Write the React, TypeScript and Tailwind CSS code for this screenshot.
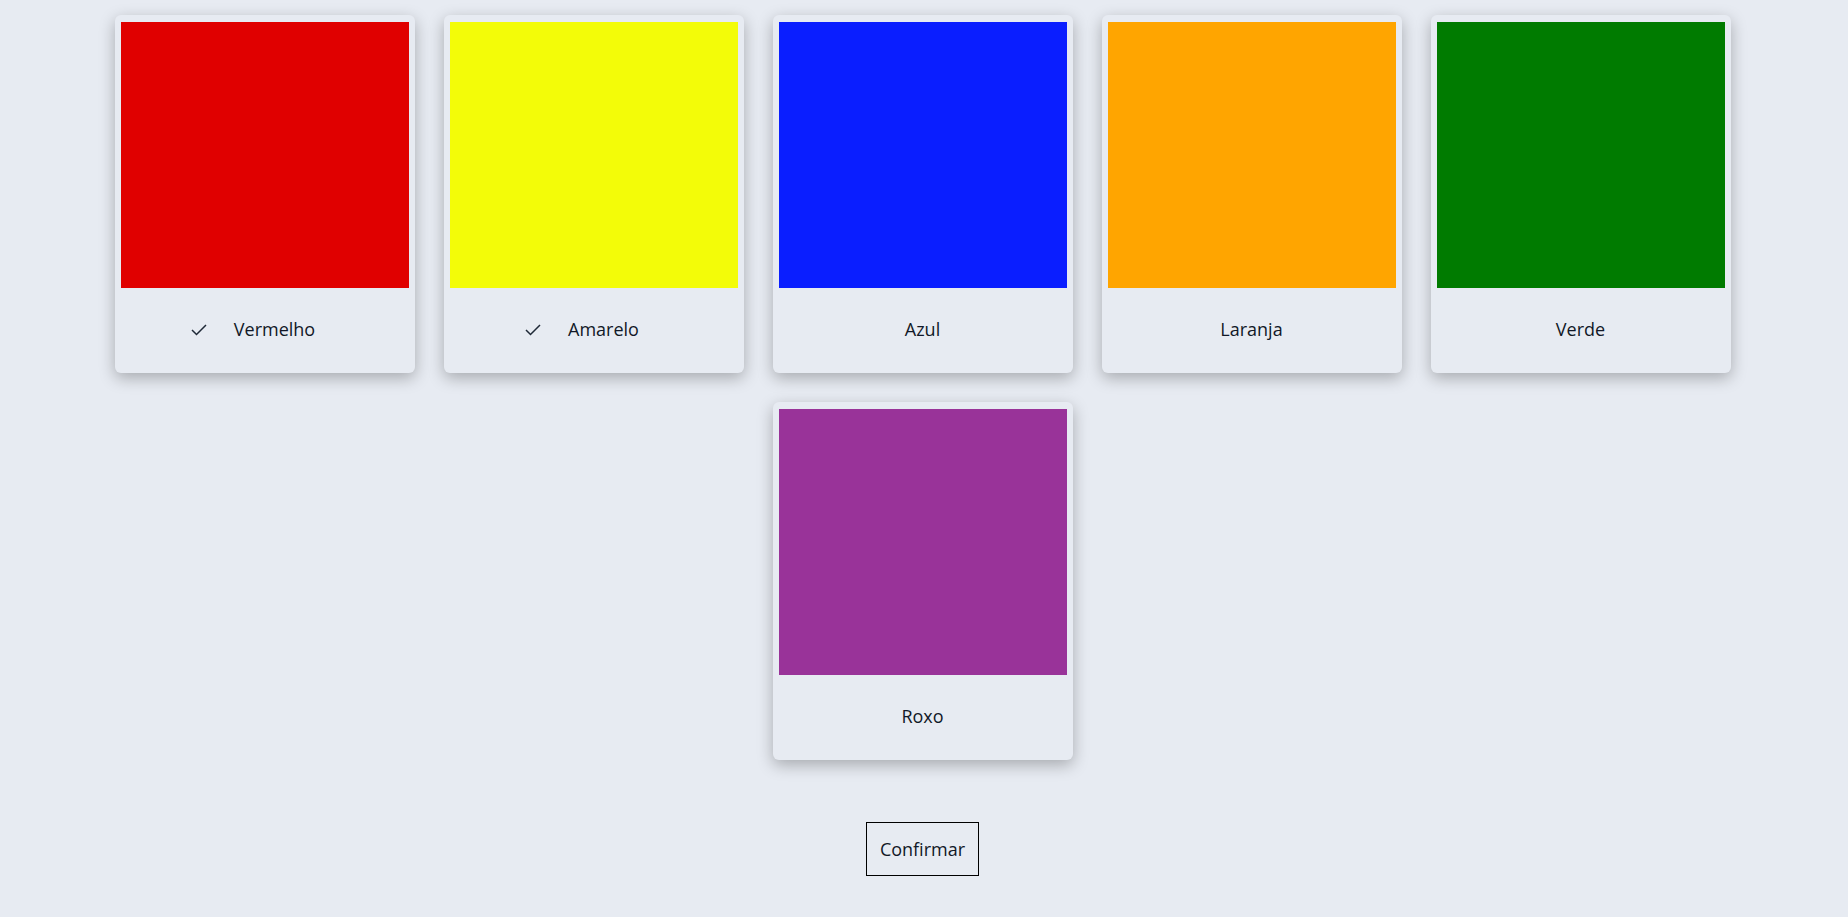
import { useState } from "react"

const cores = [
  { nome: "Vermelho", cor: "bg-[#e00000]" },
  { nome: "Amarelo", cor: "bg-[#f3fc08]" },
  { nome: "Azul", cor: "bg-[#0a1eff]" },
  { nome: "Laranja", cor: "bg-[#ffa500]" },
  { nome: "Verde", cor: "bg-[#007b00]" },
  { nome: "Roxo", cor: "bg-[#993399]" },
]

export default function App() {
  const [selecionadas, setSelecionadas] = useState<string[]>(["Vermelho", "Amarelo"])

  const alternar = (nome: string) => {
    setSelecionadas((atual) =>
      atual.includes(nome) ? atual.filter((n) => n !== nome) : [...atual, nome]
    )
  }

  return (
    <div className="min-h-screen bg-[#e7ebf2] text-[#111827] font-['Open_Sans',sans-serif]">
      <div className="flex flex-col items-center pt-[15px] pr-[3px]">
        {/* Cartões */}
        <div className="flex flex-wrap justify-center gap-x-[29px] gap-y-[29px] w-[1616px]">
          {cores.map((c) => {
            const marcada = selecionadas.includes(c.nome)
            return (
              <div
                key={c.nome}
                onClick={() => alternar(c.nome)}
                className="w-[300px] h-[358px] rounded-md bg-[#e7ebf2] shadow-[0_5px_16px_rgba(0,0,0,0.28)] pt-[7px] px-[6px] flex flex-col cursor-pointer"
              >
                <div className={`h-[266px] w-full ${c.cor}`} />
                <div className="flex-1 flex items-center justify-center text-[18px] pb-[2px]">
                  {marcada && (
                    <svg width="16" height="12" viewBox="0 0 16 12" className="mr-[27px] mt-[1px]">
                      <polyline points="1,6 5.5,10.5 15,1" fill="none" stroke="#1f2937" strokeWidth="1.5" />
                    </svg>
                  )}
                  <span>{c.nome}</span>
                  {marcada && <span className="w-[23px]" />}
                </div>
              </div>
            )
          })}
        </div>

        {/* Botão */}
        <button className="mt-[62px] h-[54px] px-[13px] border border-black text-[18px] text-[#111827]">
          Confirmar
        </button>
      </div>
    </div>
  )
}
